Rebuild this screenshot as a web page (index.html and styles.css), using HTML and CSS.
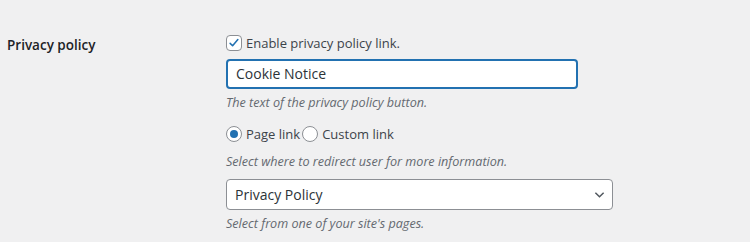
FILE: index.html
```html
<!DOCTYPE html>
<html lang="en">
<head>
    <meta charset="UTF-8">
    <title>Cookie Notice settings</title>
    <link rel="stylesheet" href="styles.css">
</head>
<body>
    <div class="form-row">
        <div class="row-label">Privacy policy</div>
        <div class="row-fields">
            <label class="check-line">
                <span class="checkbox checked">
                    <svg viewBox="0 0 20 20" width="16" height="16"><path d="M4.5 10.5l3.5 3.5 7.5-9" fill="none" stroke="#2271b1" stroke-width="2.2" stroke-linecap="round" stroke-linejoin="round"/></svg>
                </span>
                Enable privacy policy link.
            </label>
            <div class="text-input focused">Cookie Notice</div>
            <p class="description">The text of the privacy policy button.</p>
            <div class="radio-line">
                <label><span class="radio checked"></span>Page link</label>
                <label><span class="radio"></span>Custom link</label>
            </div>
            <p class="description spaced">Select where to redirect user for more information.</p>
            <div class="select-box">
                <span>Privacy Policy</span>
                <svg viewBox="0 0 12 8" width="11" height="8"><path d="M1.5 1.5l4.5 4.5 4.5-4.5" fill="none" stroke="#50575e" stroke-width="1.6"/></svg>
            </div>
            <p class="description">Select from one of your site's pages.</p>
        </div>
    </div>
</body>
</html>
```

FILE: styles.css
```css
* {
    box-sizing: border-box;
}
body {
    margin: 0;
    background-color: #f0f0f1;
    font-family: 'Open Sans', sans-serif;
    font-size: 13px;
    color: #3c434a;
}
.form-row {
    display: flex;
    padding-top: 33px;
}
.row-label {
    width: 226px;
    padding-left: 7px;
    padding-top: 3px;
    font-size: 13.5px;
    font-weight: 600;
    color: #1d2327;
}
.row-fields {
    display: flex;
    flex-direction: column;
    align-items: flex-start;
}
.check-line {
    display: flex;
    align-items: center;
    gap: 4px;
    height: 20px;
    color: #3c434a;
}
.checkbox {
    width: 16px;
    height: 16px;
    border: 1px solid #8c8f94;
    border-radius: 4px;
    background: #fff;
    display: flex;
    align-items: center;
    justify-content: center;
}
.text-input {
    margin-top: 6px;
    width: 352px;
    height: 30px;
    line-height: 26px;
    padding: 0 8px;
    background: #fff;
    border: 2px solid #2271b1;
    border-radius: 4px;
    color: #2c3338;
    font-size: 14px;
}
.description {
    margin: 4px 0 0;
    font-style: italic;
    font-size: 12.6px;
    color: #646970;
    line-height: 20px;
}
.description.spaced {
    margin-top: 5px;
}
.radio-line {
    display: flex;
    align-items: center;
    height: 26px;
    margin-top: 8px;
}
.radio-line label {
    display: flex;
    align-items: center;
    gap: 4px;
    margin-right: 2px;
}
.radio {
    width: 16px;
    height: 16px;
    border: 1px solid #8c8f94;
    border-radius: 50%;
    background: #fff;
    position: relative;
}
.radio.checked::after {
    content: '';
    position: absolute;
    left: 3px;
    top: 3px;
    width: 8px;
    height: 8px;
    border-radius: 50%;
    background: #2271b1;
}
.select-box {
    margin-top: 7px;
    width: 387px;
    height: 31px;
    padding: 0 7px 0 8px;
    display: flex;
    align-items: center;
    justify-content: space-between;
    background: #fff;
    border: 1px solid #8c8f94;
    border-radius: 4px;
    color: #2c3338;
    font-size: 14px;
}
```
